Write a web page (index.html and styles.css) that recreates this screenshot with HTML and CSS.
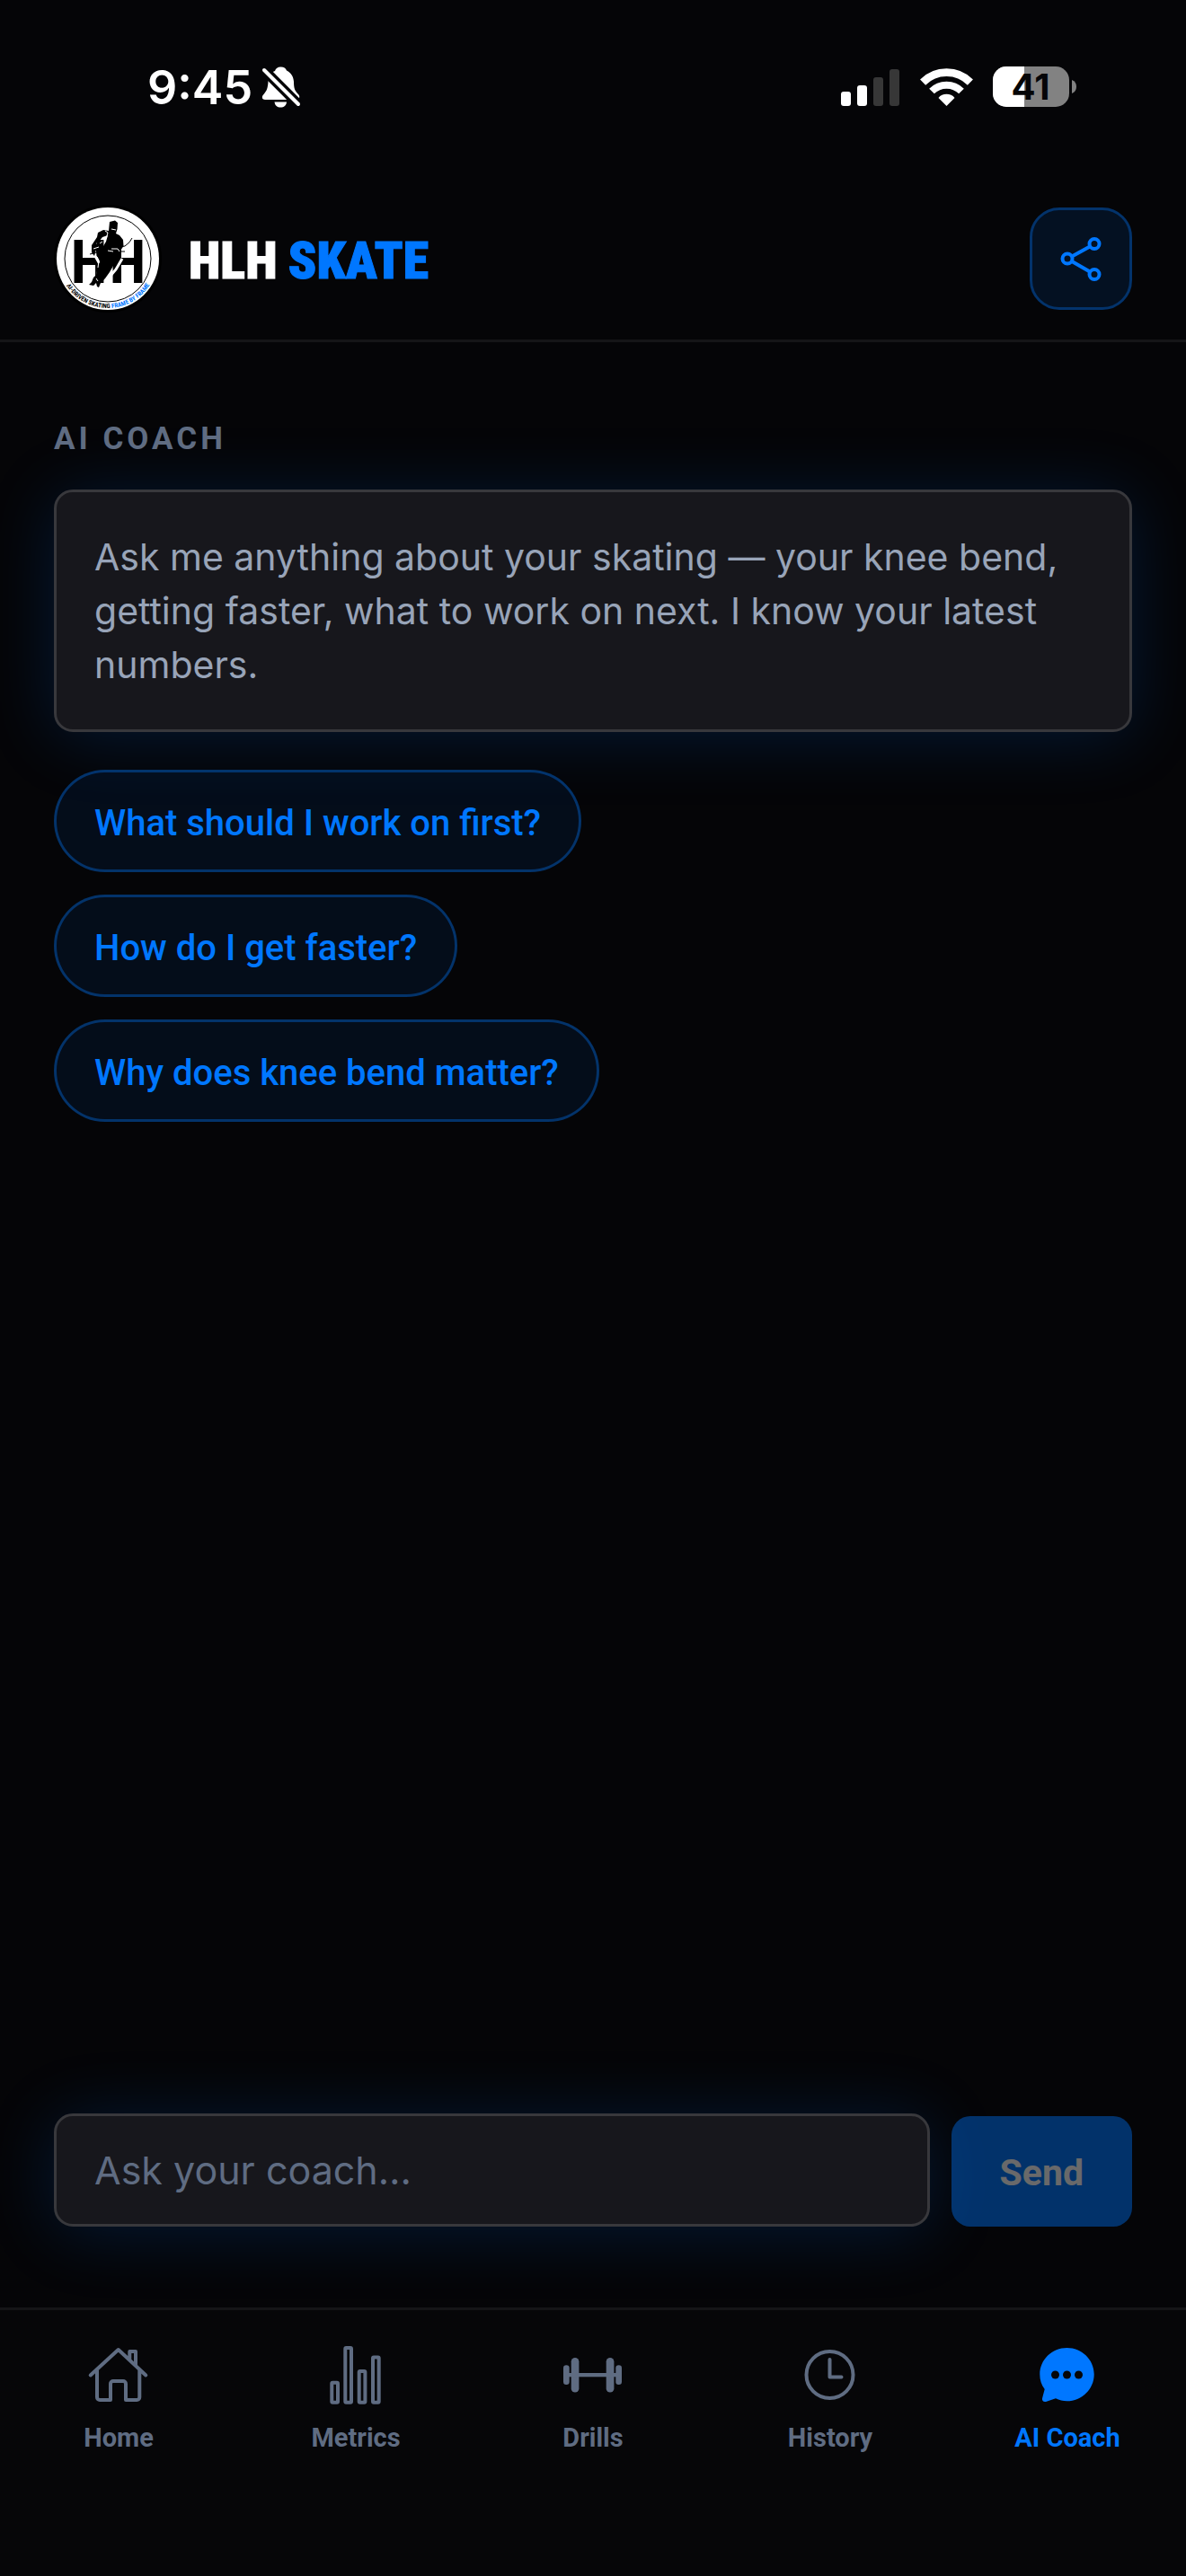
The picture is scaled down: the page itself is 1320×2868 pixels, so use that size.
FILE: index.html
```html
<!DOCTYPE html>
<html lang="en">

<head>
    <meta charset="UTF-8">
    <meta name="viewport" content="width=device-width, initial-scale=1.0">
    <title>HLH Skate - AI Coach</title>
    <link rel="stylesheet" href="styles.css">
</head>

<body>
    <!-- Status bar -->
    <div class="status-bar">
        <div class="status-left">
            <span class="time">9:45</span>
            <svg class="bell" viewBox="0 0 48 52" aria-hidden="true">
                <path fill="#fff" d="M17 8C18 5 20 3.5 23.5 3.5S29 5 30 7.5C35 10 37.5 14 38 20C38 27 39 30 43 34C45.500 36.500 44 40 41 40H6C3 40 1.500 37 4.500 34C8 30 9 27 9.500 20C10 14 12 10 17 8Z" />
                <path fill="#fff" d="M16.500 42.500H30C29.500 46.500 27 48.500 23.300 48.500S17 46.500 16.500 42.500Z" />
                <path stroke="#050507" stroke-width="11" d="M2 4L46 48" />
                <path stroke="#fff" stroke-width="4" stroke-linecap="round" d="M5 7L43 45" />
            </svg>
        </div>
        <div class="status-right">
            <svg class="signal" viewBox="0 0 66 42" aria-hidden="true">
                <rect x="0" y="26" width="11" height="16" rx="3" fill="#fff" />
                <rect x="18" y="19" width="11" height="23" rx="3" fill="#fff" />
                <rect x="36" y="10" width="11" height="32" rx="3" fill="#373737" />
                <rect x="54" y="1" width="11" height="41" rx="3" fill="#373737" />
            </svg>
            <svg class="wifi" viewBox="0 0 63 48" aria-hidden="true">
                <path fill="none" stroke="#fff" stroke-width="8.6" d="M5.100 18.600A37.300 37.300 0 0 1 57.900 18.600" />
                <path fill="none" stroke="#fff" stroke-width="8" d="M15 28.500A23.300 23.300 0 0 1 48 28.500" />
                <path fill="#fff" d="M31.500 45L22.500 36C24.500 33 28 31.700 31.500 31.700S38.500 33 40.500 36Z" />
            </svg>
            <svg class="battery" viewBox="0 0 94 46" role="img" aria-label="Battery 41 percent">
                <clipPath id="batteryLevel"><rect x="0" y="0" width="35" height="46" /></clipPath>
                <rect x="0" y="0" width="85" height="45" rx="15" fill="#828282" />
                <rect x="0" y="0" width="85" height="45" rx="15" fill="#fff" clip-path="url(#batteryLevel)" />
                <path fill="#828282" d="M88 15C91.500 16.500 93 19 93 22.500S91.500 28.500 88 30Z" />
                <text class="battery-text" x="42" y="37" text-anchor="middle">41</text>
            </svg>
        </div>
    </div>

    <!-- App header -->
    <header class="header">
        <div class="brand">
            <svg class="logo" viewBox="0 0 120 120" role="img" aria-label="HLH logo">
                <circle cx="60" cy="60" r="60" fill="#000" />
                <circle cx="60" cy="60" r="57" fill="#fff" />
                <circle cx="60" cy="60" r="48" fill="none" stroke="#000" />
                <text class="logo-letter" x="39" y="87" text-anchor="middle">H</text>
                <text class="logo-letter" x="82" y="87" text-anchor="middle">H</text>
                <!-- Skater -->
                <path fill="none" stroke="#fff" stroke-width="3" d="M50 34L45 45L46 57L51 66L47 86M76 60L69 72L63 79" />
                <path fill="#000" d="M62 19L68 17.500L71 20L70.500 27L69 32L73 34L77 39L77.500 46L74 51L75 55L73 61L66 68L62 75L57 82L52 87L50 92L48 91L47 87L44 90L39 89L42 86L44 81L47 78L48 69L51 64L50 57L53 51L55 46L58 41L60 34L54 36L50 41L47 43L47 50L45 57L42 53L42 45L48 36L49 31L55 28L61 29Z" />
                <path fill="none" stroke="#000" stroke-width="1" d="M40 55L67 48L79 46Q85 42 87 37M71 52L79 52" />
                <path fill="none" stroke="#fff" stroke-width="1" d="M57 29L60 31L58 38M64 27L69 28M44 49L50 47M51 43L54 41M64 49L71 49L73 52M48 58L50 62L49 70M60 51L66 52M47 82L49 85" />
                <path id="logoArc" fill="none" d="M13.900 90A55 55 0 0 0 108 87" />
                <text class="logo-tag"><textPath href="#logoArc">AI-DRIVEN SKATING <tspan class="logo-tag-blue">FRAME BY FRAME</tspan></textPath></text>
            </svg>
            <h1 class="brand-name"><span>HLH</span> <span class="accent">SKATE</span></h1>
        </div>
        <button class="share-button" type="button" aria-label="Share">
            <svg class="share-icon" viewBox="0 0 60 60" aria-hidden="true">
                <path d="M20 27.500L40 16.500M20 33L40 44.500" />
                <circle cx="15" cy="30" r="5.500" />
                <circle cx="45" cy="13.500" r="5.500" />
                <circle cx="45" cy="47.500" r="5.500" />
            </svg>
        </button>
    </header>

    <!-- Coach conversation -->
    <main class="content">
        <h2 class="section-label">AI COACH</h2>
        <p class="message">Ask me anything about your skating — your knee bend, getting faster, what to work on next. I know your latest numbers.</p>
        <div class="suggestions">
            <button class="chip" type="button">What should I work on first?</button>
            <button class="chip" type="button">How do I get faster?</button>
            <button class="chip" type="button">Why does knee bend matter?</button>
        </div>
    </main>

    <form class="composer">
        <input class="composer-input" type="text" aria-label="Ask your coach" placeholder="Ask your coach…">
        <button class="send-button" type="submit" disabled>Send</button>
    </form>

    <!-- Bottom navigation -->
    <nav class="tab-bar">
        <a class="tab" href="#home">
            <svg class="tab-icon" viewBox="0 0 72 72" aria-hidden="true">
                <path d="M4.700 36.500L35.700 8L66.300 36.500M48.300 19V10H55V25M12 31V61a3 3 0 0 0 3 3H27V46a3 3 0 0 1 3-3H41a3 3 0 0 1 3 3V64H56.300a3 3 0 0 0 3-3V31" />
            </svg>
            <span>Home</span>
        </a>
        <a class="tab" href="#metrics">
            <svg class="tab-icon" viewBox="0 0 72 72" aria-hidden="true">
                <rect x="9.300" y="44.700" width="6.700" height="22" rx="1" />
                <rect x="24.300" y="6" width="6.700" height="60.700" rx="1" />
                <rect x="39.700" y="32" width="6.700" height="34.700" rx="1" />
                <rect x="55" y="16.500" width="6.700" height="50.200" rx="1" />
            </svg>
            <span>Metrics</span>
        </a>
        <a class="tab" href="#drills">
            <svg class="tab-icon filled" viewBox="0 0 72 72" aria-hidden="true">
                <rect x="3" y="25.300" width="6.700" height="21.700" rx="3.300" />
                <rect x="11.700" y="17" width="8.700" height="38.500" rx="4.300" />
                <rect x="50.700" y="17" width="8.700" height="38.500" rx="4.300" />
                <rect x="61.300" y="25.300" width="6.700" height="21.700" rx="3.300" />
                <rect x="8" y="34" width="56" height="4.300" />
            </svg>
            <span>Drills</span>
        </a>
        <a class="tab" href="#history">
            <svg class="tab-icon" viewBox="0 0 72 72" aria-hidden="true">
                <circle cx="35.500" cy="36" r="26" />
                <path d="M35.500 19V38.500H48.500" />
            </svg>
            <span>History</span>
        </a>
        <a class="tab active" href="#coach" aria-current="page">
            <svg class="tab-icon filled" viewBox="0 0 72 72" aria-hidden="true">
                <path d="M35.500 6C52 6 65.700 19 65.700 35.500S52 65.300 35.500 65.300C31 65.300 27 64.300 23 62.300L12 66C9.500 66.500 7.500 65 8 62.300L10.700 52C7 47 5.300 42 5.300 35.500C5.300 19 19 6 35.500 6Z" />
                <g fill="#060608">
                    <circle cx="22.500" cy="36" r="4.500" />
                    <circle cx="35.500" cy="36" r="4.500" />
                    <circle cx="48.500" cy="36" r="4.500" />
                </g>
            </svg>
            <span>AI Coach</span>
        </a>
    </nav>
</body>

</html>
```
FILE: styles.css
```css
* {
    box-sizing: border-box;
}

body {
    display: flex;
    flex-direction: column;
    min-height: 100vh;
    margin: 0;
    background-color: #050507;
    color: white;
    font-family: Roboto, Arial, sans-serif;
}

button,
input {
    font-family: inherit;
}

/* Status bar */
.status-bar {
    display: flex;
    justify-content: space-between;
    align-items: center;
    padding: 67px 121px 71px 164px;
    line-height: 60px;
}

.status-left,
.status-right {
    display: flex;
    align-items: center;
}

.status-left {
    gap: 8px;
}

.status-right {
    gap: 20px;
}

.time {
    padding-top: 2px;
    font-family: Inter, sans-serif;
    font-size: 52px;
    font-weight: 600;
    line-height: 58px;
}

.bell {
    width: 48px;
    height: 52px;
}

.signal {
    width: 66px;
    height: 42px;
}

.wifi {
    width: 63px;
    height: 48px;
}

.battery {
    width: 94px;
    height: 46px;
}

.battery-text {
    fill: #050507;
    font-family: Inter, sans-serif;
    font-size: 40px;
    font-weight: 700;
}

/* App header */
.header {
    display: flex;
    justify-content: space-between;
    align-items: center;
    padding: 30px 60px;
    border-bottom: 3px solid #151517;
}

.brand {
    display: flex;
    align-items: center;
    gap: 30px;
}

.logo {
    width: 120px;
    height: 120px;
}

.logo-letter {
    font-family: "Roboto Condensed", Roboto, sans-serif;
    font-size: 66px;
    font-weight: 700;
}

.logo-tag {
    font-family: "Roboto Condensed", Roboto, sans-serif;
    font-size: 7px;
    font-weight: 700;
}

.logo-tag-blue {
    fill: #0077ff;
}

.brand-name {
    display: flex;
    gap: 12px;
    margin: 0;
    padding-top: 4px;
    font-family: "Roboto Condensed", Roboto, sans-serif;
    font-size: 58px;
    font-weight: 900;
    line-height: 72px;
    -webkit-text-stroke: 1px currentColor;
}

.accent {
    color: #0077ff;
}

.share-button {
    display: flex;
    justify-content: center;
    align-items: center;
    width: 114px;
    height: 114px;
    padding: 0;
    border: 3px solid #03336b;
    border-radius: 33px;
    background-color: #041122;
    cursor: pointer;
}

.share-icon {
    width: 60px;
    height: 60px;
    fill: none;
    stroke: #0077ff;
    stroke-width: 4;
}

/* Conversation */
.content {
    flex: 1;
    padding: 86px 60px 42px;
}

.section-label {
    margin: 0 0 34px;
    color: #5f6c82;
    font-size: 35px;
    font-weight: 700;
    letter-spacing: 4px;
    line-height: 44px;
}

.message {
    margin: 0;
    padding: 42px;
    border: 3px solid #38383c;
    border-radius: 21px;
    background-color: #17171c;
    box-shadow: 0 6px 78px rgba(0, 119, 255, 0.18);
    color: #98a4b8;
    font-family: Inter, sans-serif;
    font-size: 41px;
    line-height: 60px;
}

.suggestions {
    display: flex;
    flex-direction: column;
    align-items: flex-start;
    gap: 25px;
    margin-top: 42px;
}

.chip {
    padding: 33px 42px 27px;
    border: 3px solid rgba(0, 119, 255, 0.4);
    border-radius: 57px;
    background-color: rgba(0, 119, 255, 0.08);
    background-clip: padding-box;
    color: #0077ff;
    font-size: 40px;
    font-weight: 500;
    line-height: 48px;
    cursor: pointer;
}

/* Composer */
.composer {
    display: flex;
    align-items: flex-end;
    gap: 24px;
    padding: 0 60px 90px;
}

.composer-input {
    flex: 1;
    min-width: 0;
    height: 126px;
    padding: 30px 42px;
    border: 3px solid #38383c;
    border-radius: 21px;
    background-color: #17171c;
    box-shadow: 0 6px 78px rgba(0, 119, 255, 0.18);
    color: white;
    font-family: Inter, sans-serif;
    font-size: 43px;
    line-height: 60px;
}

.composer-input::placeholder {
    color: #5f6c82;
    opacity: 1;
}

.send-button {
    padding: 38px 54px 34px;
    border: none;
    border-radius: 21px;
    background-color: #0077ff;
    color: white;
    font-size: 41px;
    font-weight: 700;
    line-height: 51px;
}

.send-button:disabled {
    opacity: 0.4;
}

/* Bottom navigation */
.tab-bar {
    display: flex;
    padding: 36px 0 136px;
    border-top: 3px solid #151517;
    background-color: #060608;
}

.tab {
    display: flex;
    flex: 1;
    flex-direction: column;
    align-items: center;
    gap: 16px;
    color: #5f6c82;
    font-size: 29px;
    font-weight: 700;
    line-height: 36px;
    text-decoration: none;
}

.tab.active {
    color: #0077ff;
}

.tab-icon {
    width: 72px;
    height: 72px;
    fill: none;
    stroke: currentColor;
    stroke-width: 4;
    stroke-linecap: round;
    stroke-linejoin: round;
}

.tab-icon.filled {
    fill: currentColor;
    stroke: none;
}
```
